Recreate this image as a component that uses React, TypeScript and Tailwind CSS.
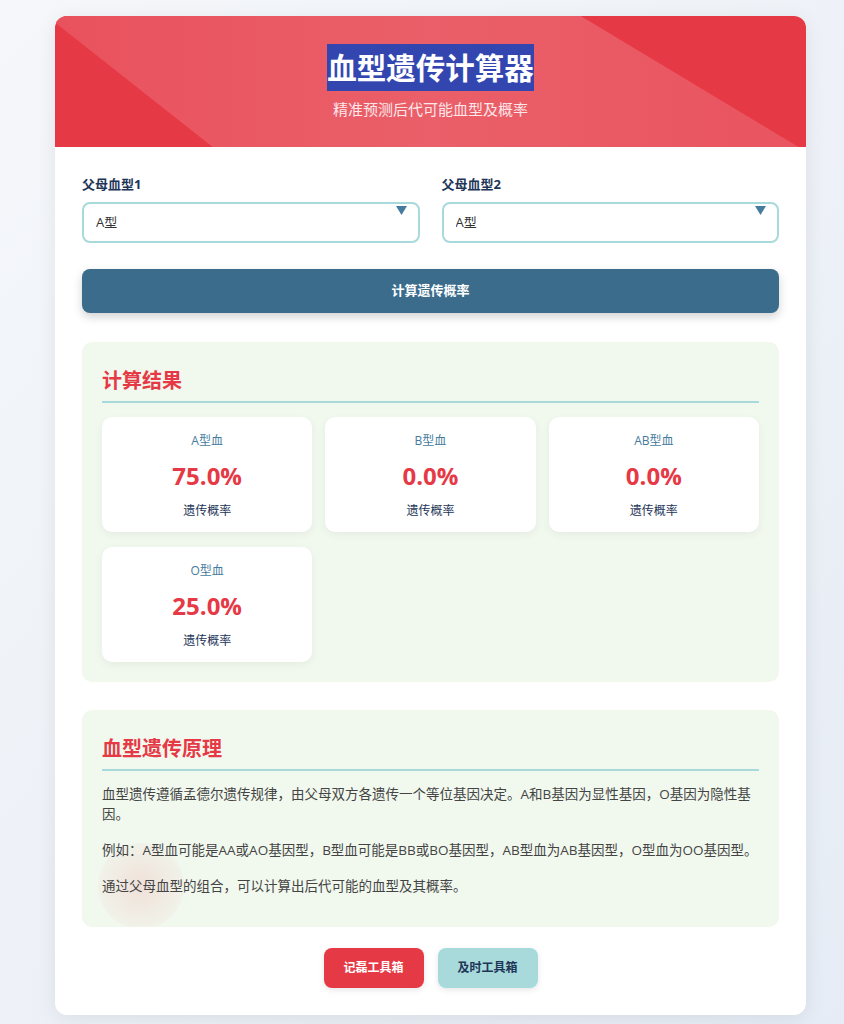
import React, { useState } from "react";

const FONT = "font-['Open_Sans','Noto_Sans_CJK_SC',sans-serif]";

type Blood = "A" | "B" | "AB" | "O";

const GENOTYPES: Record<Blood, string[][]> = {
  A: [["A", "A"], ["A", "O"]],
  B: [["B", "B"], ["B", "O"]],
  AB: [["A", "B"]],
  O: [["O", "O"]],
};

// rough estimate: assume AO for A / BO for B parents (matches the classic table)
function calc(p1: Blood, p2: Blood) {
  const g1 = p1 === "A" ? ["A", "O"] : p1 === "B" ? ["B", "O"] : GENOTYPES[p1][0];
  const g2 = p2 === "A" ? ["A", "O"] : p2 === "B" ? ["B", "O"] : GENOTYPES[p2][0];
  const counts: Record<Blood, number> = { A: 0, B: 0, AB: 0, O: 0 };
  g1.forEach((a) =>
    g2.forEach((b) => {
      const s = [a, b].sort().join("");
      if (s === "AB") counts.AB++;
      else if (s.includes("A")) counts.A++;
      else if (s.includes("B")) counts.B++;
      else counts.O++;
    }),
  );
  return counts;
}

function BloodSelect({ label, value, onChange }: { label: string; value: Blood; onChange: (v: Blood) => void }) {
  return (
    <div className="flex flex-col">
      <label className="mb-[8px] text-[13px] font-bold leading-[19px] text-[#1d3557]">{label}</label>
      <div className="relative">
        <select
          value={value}
          onChange={(e) => onChange(e.target.value as Blood)}
          className="h-[41px] w-full appearance-none rounded-[8px] border-2 border-[#a8dadc] bg-white px-[12px] text-[13px] text-[#333] outline-none"
        >
          <option value="A">A型</option>
          <option value="B">B型</option>
          <option value="AB">AB型</option>
          <option value="O">O型</option>
        </select>
        <svg className="pointer-events-none absolute right-[13px] top-[4px]" width="11" height="9" viewBox="0 0 11 9">
          <path d="M0 0h11L5.5 9z" fill="#457b9d" />
        </svg>
      </div>
    </div>
  );
}

function ResultCard({ name, value }: { name: string; value: number }) {
  return (
    <div className="flex flex-col items-center rounded-[10px] bg-white pb-[12px] pt-[15px] shadow-[0_3px_10px_rgba(0,0,0,0.05)]">
      <div className="text-[12px] leading-[18px] text-[#457b9d]">{name}</div>
      <div className="mt-[8px] text-[24px] font-bold leading-[36px] text-[#e63946]">{value.toFixed(1)}%</div>
      <div className="mt-[8px] text-[12px] leading-[18px] text-[#1d3557]">遗传概率</div>
    </div>
  );
}

export default function App() {
  const [p1, setP1] = useState<Blood>("A");
  const [p2, setP2] = useState<Blood>("A");
  const [result, setResult] = useState(() => calc("A", "A"));

  const total = result.A + result.B + result.AB + result.O;
  const pct = (n: number) => (n / total) * 100;

  return (
    <div className={`min-h-[1024px] bg-[linear-gradient(135deg,#f5f7fa,#e6ecf5)] pt-[16px] pb-[9px] ${FONT}`}>
      <div className="ml-[55px] w-[751px] overflow-hidden rounded-[12px] bg-white shadow-[0_4px_20px_rgba(0,0,0,0.08)]">
        {/* header */}
        <div className="relative flex h-[131px] flex-col items-center justify-center overflow-hidden bg-[#e63946]">
          <div className="absolute inset-0 bg-[linear-gradient(90deg,#e9525d,#ea5f69_50%,#e9545f)] [clip-path:polygon(0_0,70%_0,99%_100%,21%_100%,0_5%)]" />
          <h1 className="relative bg-[#3346b0] text-[29.5px] font-bold leading-[47px] text-white">血型遗传计算器</h1>
          <p className="relative mt-[7px] text-[15px] leading-[22px] text-[#fde7e9]">精准预测后代可能血型及概率</p>
        </div>

        <div className="px-[27px] pb-[27px] pt-[28px]">
          {/* form */}
          <div className="grid grid-cols-2 gap-[22px]">
            <BloodSelect label="父母血型1" value={p1} onChange={setP1} />
            <BloodSelect label="父母血型2" value={p2} onChange={setP2} />
          </div>
          <button
            onClick={() => setResult(calc(p1, p2))}
            className="mt-[26px] h-[44px] w-full rounded-[8px] bg-[#3b6c8c] text-[13px] font-bold text-white shadow-[0_4px_10px_rgba(0,0,0,0.18)]"
          >
            计算遗传概率
          </button>

          {/* results */}
          <div className="mt-[29px] rounded-[10px] bg-[#f1f8ee] px-[20px] pb-[20px] pt-[24px]">
            <h2 className="border-b-2 border-[#a8dadc] pb-[6px] text-[20px] font-bold leading-[29px] text-[#e63946]">计算结果</h2>
            <div className="mt-[14px] grid grid-cols-3 gap-x-[13px] gap-y-[15px]">
              <ResultCard name="A型血" value={pct(result.A)} />
              <ResultCard name="B型血" value={pct(result.B)} />
              <ResultCard name="AB型血" value={pct(result.AB)} />
              <ResultCard name="O型血" value={pct(result.O)} />
            </div>
          </div>

          {/* principle */}
          <div className="relative mt-[28px] overflow-hidden rounded-[10px] bg-[#f1f8ee] px-[20px] pb-[17px] pt-[24px]">
            <div className="pointer-events-none absolute left-[16px] top-[133px] h-[86px] w-[86px] rounded-full bg-[radial-gradient(circle,rgba(230,57,70,0.12),rgba(230,57,70,0.03)_70%,transparent)]" />
            <h2 className="relative border-b-2 border-[#a8dadc] pb-[6px] text-[20px] font-bold leading-[29px] text-[#e63946]">血型遗传原理</h2>
            <div className="relative mt-[13px] text-[13.5px] leading-[20px] text-[#444]">
              <p className="mb-[16px]">血型遗传遵循孟德尔遗传规律，由父母双方各遗传一个等位基因决定。A和B基因为显性基因，O基因为隐性基因。</p>
              <p className="mb-[16px]">例如：A型血可能是AA或AO基因型，B型血可能是BB或BO基因型，AB型血为AB基因型，O型血为OO基因型。</p>
              <p className="mb-[14px]">通过父母血型的组合，可以计算出后代可能的血型及其概率。</p>
            </div>
          </div>

          {/* footer links */}
          <div className="mt-[21px] flex justify-center gap-[14px]">
            <a href="#" className="flex h-[40px] w-[100px] items-center justify-center rounded-[8px] bg-[#e63946] text-[12px] font-bold text-white shadow-[0_2px_6px_rgba(0,0,0,0.1)]">记磊工具箱</a>
            <a href="#" className="flex h-[40px] w-[100px] items-center justify-center rounded-[8px] bg-[#a8dadc] text-[12px] font-bold text-[#1d3557] shadow-[0_2px_6px_rgba(0,0,0,0.1)]">及时工具箱</a>
          </div>
        </div>
      </div>
    </div>
  );
}
